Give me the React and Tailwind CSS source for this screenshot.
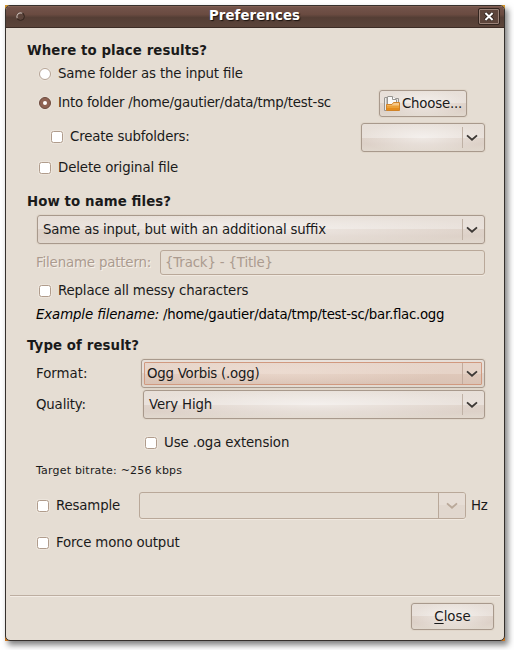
const FACE =
  "bg-[radial-gradient(ellipse_50%_60%_at_50%_50%,rgba(255,255,255,0.5),rgba(255,255,255,0)),linear-gradient(to_bottom,#e7dfd8_0%,#e9e1db_50%,#dfd3ca_50%,#ddd1c8_75%,#e1d8ce_100%)]";
const FRAME = "rounded-[3px] border border-[#a8998c] shadow-[0_0_0_1px_rgba(222,212,200,0.8)]";

function Chevron({ color = "#3c3835" }) {
  return (
    <svg width="12" height="8" viewBox="0 0 12 8" className="shrink-0">
      <path d="M1 1.4 L6 5.8 L11 1.4" fill="none" stroke={color} strokeWidth="1.8" />
    </svg>
  );
}

function Combo({ className, children }) {
  return (
    <div className={`flex h-[29px] shrink-0 items-center pl-[5px] ${FRAME} ${FACE} ${className}`}>
      <span className="flex-1">{children}</span>
      <span className="h-[21px] w-px bg-[#bfb1a5]" />
      <span className="flex w-[21px] justify-center pr-[3px]">
        <Chevron />
      </span>
    </div>
  );
}

function FocusedCombo({ children }) {
  return (
    <div className={`h-[29px] w-[344px] p-[2px] ${FRAME} ${FACE}`}>
      <div className="flex h-full items-center rounded-[1px] border border-[#d1997f] bg-[radial-gradient(ellipse_50%_70%_at_40%_40%,rgba(240,224,214,0.6),rgba(240,224,214,0)),linear-gradient(to_bottom,#e6d5ca_0%,#e6d3c7_50%,#dfc8ba_50%,#dac3b5_100%)] pl-[2px]">
        <span className="flex-1 tracking-[-0.24px]">{children}</span>
        <span className="h-full w-px bg-[#c2ab9d]" />
        <span className="flex w-[18px] justify-center">
          <Chevron />
        </span>
      </div>
    </div>
  );
}

function Check({ children }) {
  return (
    <div className="flex items-center gap-[7px]">
      <span className="h-3 w-3 shrink-0 rounded-[2.5px] border border-[#b09c8c] bg-white shadow-[0_0_0_1px_rgba(240,232,224,0.7)]" />
      <span>{children}</span>
    </div>
  );
}

function Radio({ checked, children }) {
  return (
    <div className="flex items-center gap-[7px]">
      <span
        className={`flex h-3 w-3 shrink-0 items-center justify-center rounded-full border shadow-[0_0_0_1px_rgba(240,232,224,0.5)] ${
          checked ? "border-[#6c4a3d] bg-[#8f6353]" : "border-[#b5a496] bg-white"
        }`}
      >
        {checked && <span className="h-1 w-1 rounded-full bg-white" />}
      </span>
      <span>{children}</span>
    </div>
  );
}

function FolderIcon() {
  return (
    <svg width="17" height="16" viewBox="0 0 17 16" className="shrink-0">
      <path d="M.5 14.5V2Q.5 1.5 1 1.5H3V14.5Z" fill="#eceae7" stroke="#989591" />
      <path d="M10.5 2.5H14.5V8H10.5Z" fill="#eceae7" stroke="#989591" />
      <path d="M3.5 14V1Q3.5 .5 4 .5H8.5L12.5 4V8" fill="#f9f9f8" stroke="#989591" />
      <path d="M8.5.5V3.5H12.5" fill="#fff" stroke="#989591" />
      <path d="M2.5 14.5V8.5H8L9.5 6.5H15.5V14.5Z" fill="#f6c888" stroke="#d08328" />
      <path d="M3 9.5H15V14H3Z" fill="#eba037" />
      <path d="M3 12H15V14H3Z" fill="#e48c1d" />
    </svg>
  );
}

function Heading({ children }) {
  return <h2 className="ml-[21px] h-5 shrink-0 pt-px font-bold leading-5 tracking-[0.09px]">{children}</h2>;
}

export default function App() {
  return (
    <div className="h-[650px] w-[514px] overflow-hidden bg-white pl-[5px] pt-[5px] font-['DejaVu_Sans','DejaVu_Sans',sans-serif] text-[13.333px] leading-5 tracking-[-0.16px] text-[#1a1a1a] whitespace-nowrap [font-feature-settings:'liga']">
      <div className="h-[636px] w-[500px] bg-[linear-gradient(to_bottom,#d3962e,#c8741f)] shadow-[3px_4px_6px_rgba(0,0,0,0.5)]">
        <div className="flex h-full flex-col overflow-hidden rounded-[5px] border border-[#35302c] bg-[#e5ddd3]">
          <div className="flex h-[22px] shrink-0 items-center border-b border-[#3c2c25] bg-[linear-gradient(to_bottom,#8a6759_0%,#72534a_6%,#6a4b41_40%,#543e35_55%,#5b443a_100%)] pl-[10px] pr-[4px]">
            <svg width="9" height="9" viewBox="0 0 9 9" className="-mt-px shrink-0">
              <circle cx="4.5" cy="4.5" r="3.9" fill="#5c443b" stroke="#33251f" />
              <path d="M1.3 6.2A3.7 3.7 0 0 1 6.3 1.3" fill="none" stroke="#cdbcb4" strokeWidth="1.1" />
            </svg>
            <span className="-mt-[2px] flex-1 pl-[6px] text-center font-bold leading-5 tracking-[0.09px] text-white [text-shadow:1px_1px_1px_#1c1410]">
              Preferences
            </span>
            <span className="flex h-[17px] w-[22px] items-center justify-center rounded-[2px] border border-[#33251f] bg-[#5d453b] shadow-[inset_0_0_0_1px_#9a8278]">
              <svg width="10" height="9" viewBox="0 0 10 9">
                <path d="M1 0.8L9 8.2M9 0.8L1 8.2" stroke="#2b1f1a" strokeWidth="3.6" />
                <path d="M1.4 1L8.6 8M8.6 1L1.4 8" stroke="#fff" strokeWidth="2" />
              </svg>
            </span>
          </div>

          <div className="mt-[12px] flex flex-col">
            <Heading>Where to place results?</Heading>
            <div className="flex h-[27px] items-center pl-[33px]">
              <Radio>Same folder as the input file</Radio>
            </div>
            <div className="flex h-[33px] items-center justify-between pl-[33px] pr-[37px]">
              <div className="pb-[2px] tracking-[-0.22px]">
                <Radio checked>Into folder /home/gautier/data/tmp/test-sc</Radio>
              </div>
              <button className={`flex h-[27px] w-[88px] items-center gap-px pl-[4px] tracking-[-0.2px] ${FRAME} ${FACE}`}>
                <FolderIcon />
                <span>Choose...</span>
              </button>
            </div>
            <div className="flex h-[35px] items-center justify-between pl-[45px] pr-[19px]">
              <div className="pb-[2px]">
                <Check>Create subfolders:</Check>
              </div>
              <Combo className="w-[124px]" />
            </div>
            <div className="flex h-[26px] items-center pl-[33px] tracking-[-0.12px]">
              <Check>Delete original file</Check>
            </div>
          </div>

          <div className="mt-[10px] flex flex-col">
            <Heading>How to name files?</Heading>
            <Combo className="ml-[31px] mt-[4px] w-[448px] tracking-[-0.18px]">Same as input, but with an additional suffix</Combo>
            <div className="mt-[6px] flex h-[25px] items-center pl-[30px] text-[#ab9b8f]">
              <span className="w-[124px] [text-shadow:1px_1px_0_#f6f0ea]">Filename pattern:</span>
              <span className="flex h-[25px] w-[325px] items-center rounded-[3px] border border-[#b9a899] pl-[4px] shadow-[0_1px_0_#f1e9e0]">
                {"{Track} - {Title}"}
              </span>
            </div>
            <div className="mt-[5px] flex h-[22px] items-center pl-[33px]">
              <Check>Replace all messy characters</Check>
            </div>
            <p className="ml-[30px] mt-[2px] h-5 pt-px tracking-[-0.26px] text-black">
              <em className="tracking-[-0.11px]">Example filename:</em> /home/gautier/data/tmp/test-sc/bar.flac.ogg
            </p>
          </div>

          <div className="mt-[11px] flex flex-col">
            <Heading>Type of result?</Heading>
            <div className="mt-[4px] flex h-[29px] items-center pl-[30px]">
              <span className="w-[105px] tracking-normal">Format:</span>
              <FocusedCombo>Ogg Vorbis (.ogg)</FocusedCombo>
            </div>
            <div className="mt-[2px] flex h-[29px] items-center pl-[30px]">
              <span className="w-[107px]">Quality:</span>
              <Combo className="w-[342px]">Very High</Combo>
            </div>
            <div className="mt-[14px] flex h-5 items-center pl-[139px] tracking-[-0.12px]">
              <Check>Use .oga extension</Check>
            </div>
            <p className="ml-[30px] mt-[7px] h-5 pt-px text-[11px] leading-5 tracking-[0.2px]">Target bitrate: ~256 kbps</p>
            <div className="mt-[12px] flex h-[27px] items-center pl-[31px]">
              <div className="w-[102px]">
                <Check>Resample</Check>
              </div>
              <div className="flex h-[27px] w-[327px] overflow-hidden rounded-[3px] border border-[#b9a899] shadow-[0_1px_0_#f1e9e0]">
                <span className="flex-1" />
                <span className="flex w-[27px] items-center justify-center border-l border-[#b9a899] bg-[linear-gradient(to_bottom,#e6ddd5_50%,#e1d7ce_50%)]">
                  <Chevron color="#b9a899" />
                </span>
              </div>
              <span className="pl-[5px]">Hz</span>
            </div>
            <div className="mt-[14px] flex h-5 items-center pl-[31px]">
              <Check>Force mono output</Check>
            </div>
          </div>

          <div className="mx-[4px] mt-[42px] h-[2px] shrink-0 border-b border-[#f3ece5] bg-[#bdaea1]" />
          <div className="mt-[6px] flex justify-end pr-[10px]">
            <button className={`h-[27px] w-[83px] tracking-normal ${FRAME} ${FACE}`}>
              <span className="underline underline-offset-2">C</span>lose
            </button>
          </div>
        </div>
      </div>
    </div>
  );
}
